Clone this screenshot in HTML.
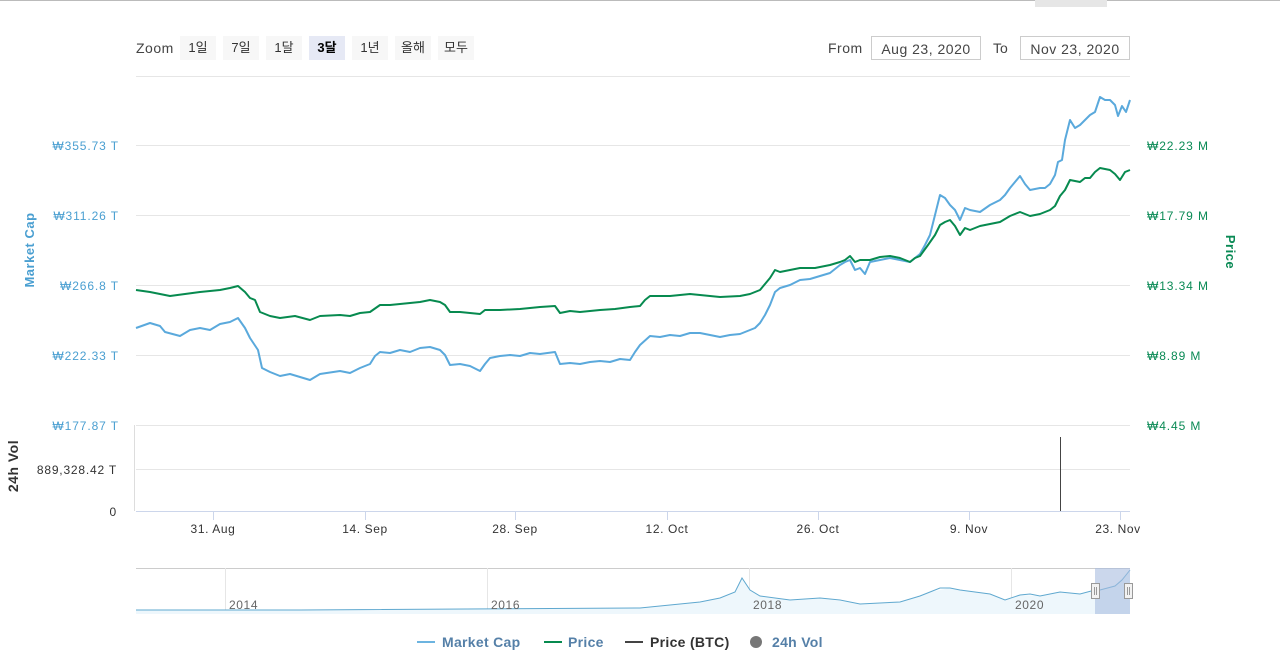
<!DOCTYPE html><html><head><meta charset="utf-8"><style>
body{margin:0;background:#fff;width:1280px;height:666px;overflow:hidden;font-family:"Liberation Sans","Noto Sans CJK KR",sans-serif}
.btn{position:absolute;top:36px;height:24px;line-height:24px;background:#f7f7f7;font-size:13px;color:#333;text-align:center}
.inp{position:absolute;top:36px;height:24px;border:1px solid #ccc;font-size:14px;color:#444;line-height:24px;text-align:center;box-sizing:border-box;letter-spacing:0.5px}
</style></head><body>
<div style="position:absolute;left:0;top:0;width:1280px;height:1px;background:#bbb"></div>
<div style="position:absolute;left:1035px;top:0;width:72px;height:7px;background:#e6e6e6"></div>
<div style="position:absolute;left:136px;top:40px;font-size:14px;color:#444;letter-spacing:0.5px">Zoom</div>
<div class="btn" style="left:180px;width:36px">1일</div>
<div class="btn" style="left:223px;width:36px">7일</div>
<div class="btn" style="left:266px;width:36px">1달</div>
<div class="btn" style="left:309px;width:36px;background:#e6e9f5;font-weight:bold;color:#000">3달</div>
<div class="btn" style="left:352px;width:36px">1년</div>
<div class="btn" style="left:395px;width:36px">올해</div>
<div class="btn" style="left:438px;width:36px">모두</div>
<div style="position:absolute;left:828px;top:40px;font-size:14px;color:#444;letter-spacing:0.5px">From</div>
<div class="inp" style="left:871px;width:110px">Aug 23, 2020</div>
<div style="position:absolute;left:993px;top:40px;font-size:14px;color:#444">To</div>
<div class="inp" style="left:1020px;width:110px">Nov 23, 2020</div>
<svg width="1280" height="666" style="position:absolute;left:0;top:0" font-family="Liberation Sans, sans-serif">
<g stroke="#e6e6e6" stroke-width="1">
<line x1="136" y1="76.5" x2="1130" y2="76.5"/><line x1="136" y1="145.5" x2="1130" y2="145.5"/><line x1="136" y1="215.5" x2="1130" y2="215.5"/><line x1="136" y1="285.5" x2="1130" y2="285.5"/><line x1="136" y1="355.5" x2="1130" y2="355.5"/><line x1="136" y1="425.5" x2="1130" y2="425.5"/><line x1="136" y1="469.5" x2="1130" y2="469.5"/>
</g>
<line x1="136" y1="511.5" x2="1130" y2="511.5" stroke="#ccd6eb"/>
<line x1="134.5" y1="425" x2="134.5" y2="511" stroke="#ddd"/>
<g stroke="#ccd6eb"><line x1="213.5" y1="511" x2="213.5" y2="520"/><line x1="365.5" y1="511" x2="365.5" y2="520"/><line x1="515.5" y1="511" x2="515.5" y2="520"/><line x1="667.5" y1="511" x2="667.5" y2="520"/><line x1="818.5" y1="511" x2="818.5" y2="520"/><line x1="969.5" y1="511" x2="969.5" y2="520"/><line x1="1120.5" y1="511" x2="1120.5" y2="520"/></g>
<line x1="1060.5" y1="437" x2="1060.5" y2="511" stroke="#444"/>
<g font-size="12" fill="#4a9fd1" text-anchor="end" letter-spacing="0.9"><text x="119" y="150">₩355.73 T</text><text x="119" y="220">₩311.26 T</text><text x="119" y="290">₩266.8 T</text><text x="119" y="360">₩222.33 T</text><text x="119" y="430">₩177.87 T</text></g>
<g font-size="12" fill="#333" text-anchor="end" letter-spacing="0.8"><text x="117" y="474">889,328.42 T</text><text x="117" y="516">0</text></g>
<g font-size="12" fill="#0a8a55" letter-spacing="0.9"><text x="1147" y="150">₩22.23 M</text><text x="1147" y="220">₩17.79 M</text><text x="1147" y="290">₩13.34 M</text><text x="1147" y="360">₩8.89 M</text><text x="1147" y="430">₩4.45 M</text></g>
<text transform="translate(34,250) rotate(-90)" text-anchor="middle" font-size="13" font-weight="bold" fill="#4a9fd1" letter-spacing="0.5">Market Cap</text>
<text transform="translate(1226,252) rotate(90)" text-anchor="middle" font-size="13" font-weight="bold" fill="#0a8a55" letter-spacing="0.5">Price</text>
<text transform="translate(18,466) rotate(-90)" text-anchor="middle" font-size="14" font-weight="bold" fill="#333" letter-spacing="0.5">24h Vol</text>
<g font-size="12" fill="#333" text-anchor="middle" letter-spacing="0.6"><text x="213" y="533">31. Aug</text><text x="365" y="533">14. Sep</text><text x="515" y="533">28. Sep</text><text x="667" y="533">12. Oct</text><text x="818" y="533">26. Oct</text><text x="969" y="533">9. Nov</text><text x="1118" y="533">23. Nov</text></g>
<polyline fill="none" stroke="#5aa9dc" stroke-width="2" stroke-linejoin="round" points="136,328 150,323 160,326 165,332 180,336 190,330 200,328 210,330 220,324 230,322 238,318 245,328 250,338 258,350 262,368 270,372 280,376 290,374 300,377 310,380 320,374 340,371 350,373 360,368 370,364 375,356 380,352 390,353 400,350 410,352 420,348 430,347 440,350 445,355 450,365 460,364 470,366 480,371 485,364 490,358 500,356 510,355 520,356 530,353 540,354 555,352 560,364 570,363 580,364 590,362 600,361 610,362 620,359 630,360 635,352 640,345 650,336 660,337 670,335 680,336 690,333 700,333 710,335 720,337 730,335 740,334 750,330 755,328 760,323 765,315 770,305 775,292 780,288 790,285 800,280 810,279 820,276 830,273 840,265 845,262 850,260 855,270 860,268 865,274 870,262 880,260 890,258 900,260 910,262 915,258 920,254 925,245 930,235 935,215 940,195 945,198 950,205 955,210 960,220 965,208 970,210 980,212 990,205 1000,200 1005,195 1010,188 1015,182 1020,176 1025,184 1030,190 1040,188 1045,188 1050,184 1055,175 1058,162 1062,160 1065,140 1070,120 1075,128 1080,125 1085,120 1090,115 1095,112 1100,97 1105,100 1110,100 1115,105 1118,116 1122,106 1126,112 1130,100"/>
<polyline fill="none" stroke="#078a4f" stroke-width="2" stroke-linejoin="round" points="136,290 150,292 160,294 170,296 185,294 200,292 220,290 230,288 238,286 245,292 250,298 255,300 260,312 270,316 280,318 295,316 310,320 320,316 340,315 350,316 360,313 370,312 380,305 390,305 400,304 410,303 420,302 430,300 440,302 445,305 450,312 460,312 470,313 480,314 485,310 500,310 520,309 540,307 555,306 560,313 570,311 580,312 600,310 615,309 630,307 640,306 645,300 650,296 670,296 690,294 700,295 720,297 740,296 750,294 760,290 765,284 770,278 775,270 780,272 790,270 800,268 815,268 830,265 840,262 845,260 850,256 855,262 860,260 870,260 880,257 890,256 900,258 910,262 915,258 920,256 928,245 935,235 940,225 945,222 950,220 955,226 960,235 965,228 970,230 980,226 990,224 1000,222 1010,216 1020,212 1030,216 1040,214 1050,210 1055,206 1060,196 1065,190 1070,180 1080,182 1085,178 1090,178 1095,172 1100,168 1110,170 1115,174 1120,180 1125,172 1130,170"/>
<line x1="136" y1="568.5" x2="1130" y2="568.5" stroke="#ccc"/>
<g stroke="#e6e6e6"><line x1="225.5" y1="568" x2="225.5" y2="614"/><line x1="487.5" y1="568" x2="487.5" y2="614"/><line x1="749.5" y1="568" x2="749.5" y2="614"/><line x1="1011.5" y1="568" x2="1011.5" y2="614"/></g>
<polygon fill="#eef7fc" stroke="none" points="136,610 300,610 640,608 700,602 720,598 735,592 742,578 750,590 760,596 790,600 820,598 860,604 900,602 930,592 950,588 990,594 1005,600 1020,595 1040,596 1060,592 1080,594 1100,590 1115,586 1130,570 1130,614 136,614"/>
<polyline fill="none" stroke="#5fa8cf" stroke-width="1" points="136,610 300,610 640,608 700,602 720,598 735,592 742,578 750,590 760,596 790,600 820,598 840,600 860,604 900,602 920,596 930,592 940,588 950,588 960,590 990,594 1005,600 1020,595 1030,594 1040,596 1060,592 1080,594 1095,590 1100,590 1115,586 1122,580 1130,570"/>
<rect x="1095" y="568" width="35" height="46" fill="#a8bde0" fill-opacity="0.6"/>
<g fill="#f2f2f2" stroke="#999"><rect x="1091.5" y="583.5" width="8" height="15"/><rect x="1124.5" y="583.5" width="8" height="15"/></g>
<g stroke="#999"><line x1="1094.5" y1="587" x2="1094.5" y2="595"/><line x1="1096.5" y1="587" x2="1096.5" y2="595"/><line x1="1127.5" y1="587" x2="1127.5" y2="595"/><line x1="1129.5" y1="587" x2="1129.5" y2="595"/></g>
<g font-size="12" fill="#666" letter-spacing="0.6"><text x="229" y="609">2014</text><text x="491" y="609">2016</text><text x="753" y="609">2018</text><text x="1015" y="609">2020</text></g>
<g font-size="14" font-weight="bold" letter-spacing="0.3">
<line x1="417" y1="642" x2="435" y2="642" stroke="#6cb4e0" stroke-width="2"/><text x="442" y="647" fill="#5580a8">Market Cap</text>
<line x1="544" y1="642" x2="562" y2="642" stroke="#078a4f" stroke-width="2"/><text x="568" y="647" fill="#5580a8">Price</text>
<line x1="625" y1="642" x2="643" y2="642" stroke="#444" stroke-width="2"/><text x="650" y="647" fill="#333">Price (BTC)</text>
<circle cx="756" cy="642" r="6" fill="#777"/><text x="772" y="647" fill="#5580a8">24h Vol</text>
</g>
</svg>
</body></html>
